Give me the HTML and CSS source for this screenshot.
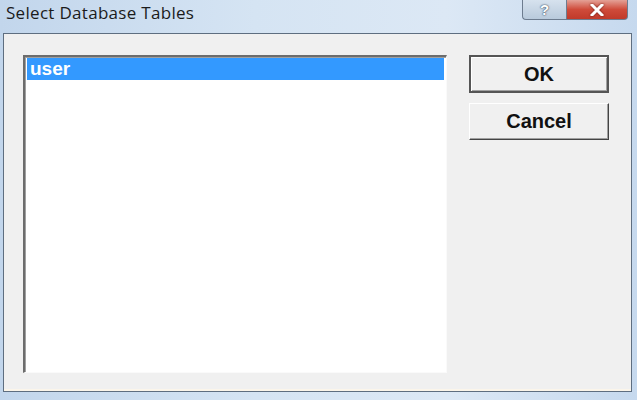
FILE: index.html
```html
<!DOCTYPE html>
<html lang="en">

<head>
    <meta charset="UTF-8" />
    <title>Select Database Tables</title>
    <link rel="stylesheet" href="styles.css">
</head>

<body>
    <div class="window">

        <header class="titlebar">
            <h1 class="title">Select Database Tables</h1>
            <div class="caption-buttons">
                <div class="cap-btn help">?</div>
                <div class="cap-btn close">
                    <svg width="14" height="12" viewBox="0 0 14 12">
                        <path d="M2 1 L12 11 M12 1 L2 11" stroke="#fff" stroke-width="3" stroke-linecap="square" />
                    </svg>
                </div>
            </div>
        </header>

        <div class="client">
            <div class="listbox">
                <div class="list-item selected">user</div>
            </div>
            <div class="buttons">
                <button class="btn default">OK</button>
                <button class="btn">Cancel</button>
            </div>
        </div>

    </div>
</body>

</html>
```

FILE: styles.css
```css
* {
    box-sizing: border-box;
    margin: 0;
    padding: 0;
}

body {
    font-family: "Liberation Sans", Arial, sans-serif;
    background: #fff;
    width: 637px;
    height: 400px;
    overflow: hidden;
}

.window {
    width: 637px;
    height: 400px;
    display: flex;
    flex-direction: column;
    padding: 0 5px 8px 3px;
    background: linear-gradient(to right, #c2d6ec, #d5e4f3 40%, #dce8f5 70%, #c6d9ee);
}

.titlebar {
    height: 33px;
    display: flex;
    justify-content: space-between;
    align-items: flex-start;
    flex-shrink: 0;
}

.title {
    font-family: "Open Sans", "Noto Sans", sans-serif;
    font-weight: normal;
    font-size: 17px;
    color: #1b1b1b;
    padding: 1px 0 0 3px;
    letter-spacing: 0.3px;
}

.caption-buttons {
    display: flex;
    margin-right: 4px;
}

.cap-btn {
    height: 20px;
    display: flex;
    align-items: center;
    justify-content: center;
    border: 1px solid #6d7c8f;
    border-top: none;
}

.help {
    width: 44px;
    border-radius: 0 0 0 4px;
    border-right: none;
    background: linear-gradient(#d6e2ee, #b9cadc);
    color: #fff;
    font-weight: bold;
    font-size: 15px;
    text-shadow: 0 0 2px #3a4a5e, 0 0 1px #3a4a5e;
}

.close {
    width: 62px;
    border-radius: 0 0 4px 0;
    background: linear-gradient(#e4a196, #cf4b3a 50%, #c13a2a);
}

.close svg {
    filter: drop-shadow(0 0 1px #6a1a10);
}

.client {
    flex: 1;
    display: flex;
    background: #f0f0f0;
    border: 1px solid #5e6e80;
    box-shadow: inset 0 -2px 0 #fbf5ea;
    padding: 21px 20px 18px 19px;
    gap: 22px;
}

.listbox {
    width: 424px;
    background: #fff;
    border-top: 2px solid #6c6c6c;
    border-left: 2px solid #6c6c6c;
    border-right: 1px solid #fafafa;
    border-bottom: 1px solid #fafafa;
    box-shadow: inset 1px 1px 0 #a0a0a0;
    padding: 1px 2px;
}

.list-item {
    height: 22px;
    font-size: 19px;
    font-weight: bold;
    line-height: 22px;
    padding-left: 3px;
}

.selected {
    background: #3399ff;
    color: #fff;
}

.buttons {
    display: flex;
    flex-direction: column;
    gap: 10px;
}

.btn {
    width: 140px;
    height: 37px;
    font-family: "Liberation Sans", Arial, sans-serif;
    font-size: 20px;
    font-weight: bold;
    color: #111;
    background: #f0f0f0;
    border: 1px solid;
    border-color: #fff #444 #444 #fff;
    box-shadow: inset -1px -1px 0 #a0a0a0;
}

.btn.default {
    height: 38px;
    border: 2px solid #555;
    box-shadow: inset 1px 1px 0 #fff, inset -1px -1px 0 #a0a0a0;
}
```
